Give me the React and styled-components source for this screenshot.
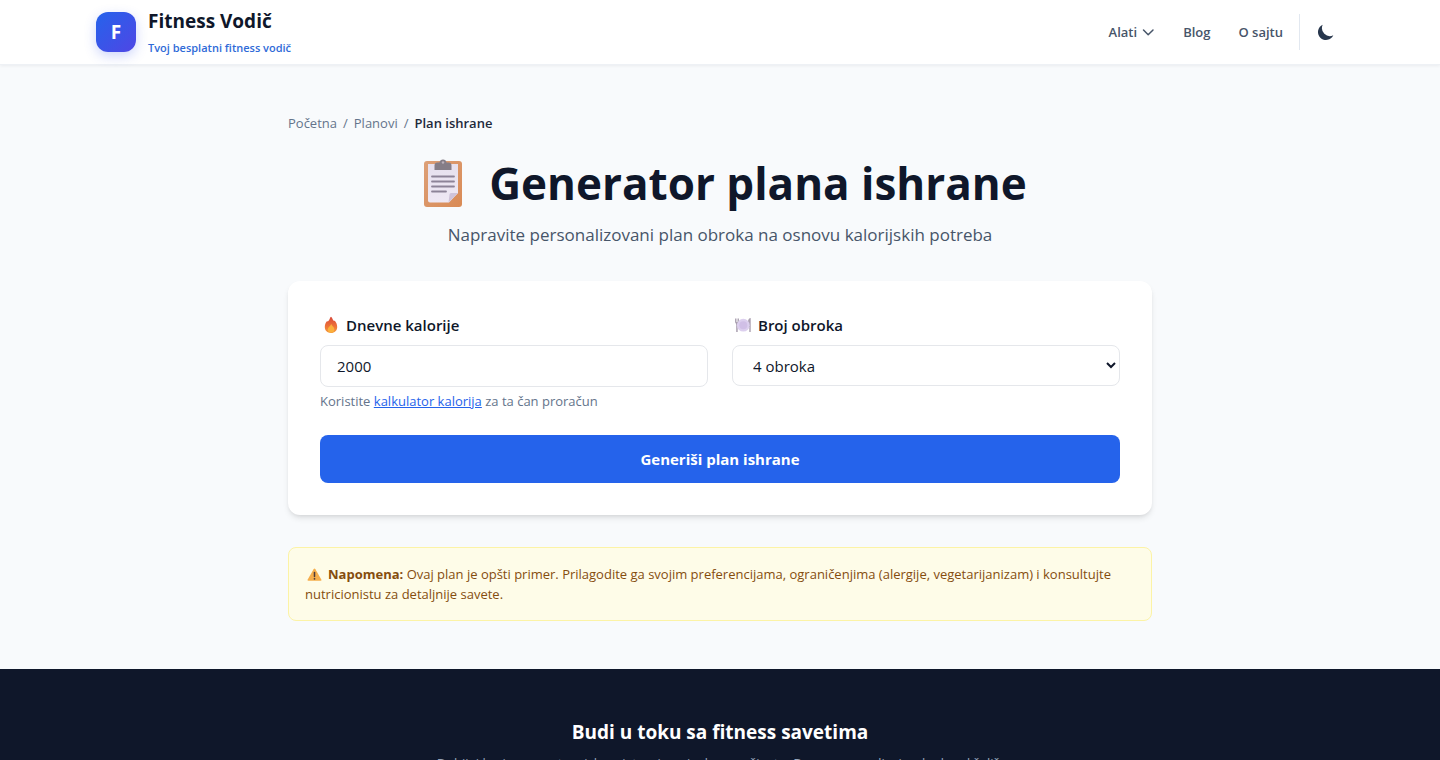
import React, { useState } from "react";
import styled, { createGlobalStyle } from "styled-components";

const GlobalStyle = createGlobalStyle`
  *, *::before, *::after { box-sizing: border-box; }
  body {
    margin: 0;
    background: #f8fafc;
    color: #0f172a;
    font-family: "Segoe UI", "Open Sans", "Noto Sans", sans-serif;
    font-size: 15px;
    line-height: 24px;
    overflow-x: hidden;
  }
  h1, h2, p { margin: 0; }
  button, input, select { font: inherit; }
`;

const Header = styled.header`
  background: #fff;
  border-bottom: 1px solid #eef1f5;
  box-shadow: 0 1px 3px rgba(15, 23, 42, 0.06);
`;

const HeaderInner = styled.div`
  max-width: 1280px;
  height: 64px;
  margin: 0 auto;
  padding: 0 16px;
  display: flex;
  align-items: center;
  justify-content: space-between;
`;

const Brand = styled.a`
  display: flex;
  align-items: center;
  gap: 12px;
  color: inherit;
  text-decoration: none;
`;

const BrandMark = styled.span`
  display: grid;
  place-items: center;
  width: 40px;
  height: 40px;
  border-radius: 12px;
  background: linear-gradient(135deg, #2563eb, #4f46e5);
  box-shadow: 0 4px 12px rgba(59, 91, 240, 0.25);
  color: #fff;
  font-size: 19px;
  font-weight: 700;
`;

const BrandText = styled.span`
  display: flex;
  flex-direction: column;
  padding-top: 4px;
`;

const BrandName = styled.span`
  font-size: 19px;
  font-weight: 700;
  line-height: 28px;
`;

const BrandTagline = styled.span`
  color: #2f6bd8;
  font-size: 11px;
  font-weight: 600;
  line-height: 26px;
`;

const Nav = styled.nav`
  display: flex;
  align-items: center;
  gap: 28px;
  padding-right: 8px;
`;

const navItem = `
  color: #475569;
  font-size: 13px;
  font-weight: 600;
  line-height: 20px;
`;

const NavLink = styled.a`
  ${navItem}
  text-decoration: none;
`;

const NavButton = styled.button`
  ${navItem}
  display: flex;
  align-items: center;
  gap: 4px;
  padding: 0;
  border: 0;
  background: none;
`;

const ThemeArea = styled.div`
  display: flex;
  align-items: center;
  height: 36px;
  margin-left: -12px;
  padding-left: 16px;
  border-left: 1px solid #e2e8f0;
`;

const ThemeButton = styled.button`
  display: grid;
  padding: 0;
  border: 0;
  background: none;
  color: #28374d;
`;

const Main = styled.main`
  max-width: 896px;
  margin: 0 auto;
  padding: 48px 16px;
`;

const Breadcrumbs = styled.nav`
  display: flex;
  gap: 6px;
  margin-bottom: 24px;
  color: #64748b;
  font-size: 13px;
  line-height: 20px;

  a { color: inherit; text-decoration: none; }
  strong { color: #1e293b; font-weight: 600; }
`;

const Intro = styled.div`
  display: flex;
  flex-direction: column;
  align-items: center;
  gap: 12px;
  margin-bottom: 32px;
  text-align: center;
`;

const Title = styled.h1`
  display: flex;
  align-items: center;
  gap: 24px;
  padding-left: 8px;
  font-size: 44px;
  font-weight: 700;
  line-height: 52px;
`;

const Subtitle = styled.p`
  color: #475569;
  font-size: 17px;
  line-height: 28px;
`;

const Card = styled.form`
  padding: 32px;
  border-radius: 12px;
  background: #fff;
  box-shadow: 0 4px 6px -1px rgba(0, 0, 0, 0.1), 0 2px 4px -2px rgba(0, 0, 0, 0.1);
`;

const Fields = styled.div`
  display: grid;
  grid-template-columns: 1fr 1fr;
  align-items: start;
  gap: 24px;
  margin-bottom: 24px;
`;

const Field = styled.div`
  display: flex;
  flex-direction: column;
`;

const Label = styled.label`
  display: flex;
  align-items: center;
  gap: 6px;
  margin-bottom: 8px;
  padding-left: 2px;
  font-weight: 600;
`;

const Input = styled.input`
  width: 100%;
  height: 42px;
  padding: 8px 16px;
  border: 1px solid #e5e7eb;
  border-radius: 8px;
  background: #fff;
  color: #0f172a;
`;

const Select = styled.select`
  width: 100%;
  height: 41px;
  padding: 8px 0 8px 16px;
  border: 1px solid #e5e7eb;
  border-radius: 8px;
  background: #fff;
  color: #0f172a;
`;

const Hint = styled.p`
  margin-top: 4px;
  color: #64748b;
  font-size: 13px;
  line-height: 20px;

  a { color: #2563eb; }
`;

const Submit = styled.button`
  display: block;
  width: 100%;
  height: 48px;
  border: 0;
  border-radius: 8px;
  background: #2563eb;
  color: #fff;
  font-weight: 700;
`;

const Notice = styled.p`
  margin-top: 32px;
  padding: 16px;
  border: 1px solid #fcf3a6;
  border-radius: 8px;
  background: #fefce8;
  color: #854d0e;
  font-size: 13px;
  line-height: 20px;

  svg { margin: 0 6px 0 2px; vertical-align: -3px; }
`;

const Footer = styled.footer`
  padding: 48px 16px;
  background: #0f172a;
  color: #94a3b8;
  text-align: center;
`;

const FooterTitle = styled.h2`
  margin-bottom: 6px;
  color: #fff;
  font-size: 19px;
  font-weight: 700;
  line-height: 30px;
`;

const FooterText = styled.p`
  font-size: 13px;
  line-height: 20px;
`;

function ChevronIcon() {
  return (
    <svg width="14" height="14" viewBox="0 0 14 14" fill="none" stroke="currentColor" strokeWidth="1.5" strokeLinecap="round" strokeLinejoin="round" aria-hidden="true">
      <path d="M2.500 5l4.700 4.700L12 5" />
    </svg>
  );
}

function MoonIcon() {
  return (
    <svg width="20" height="20" viewBox="0 0 20 20" fill="currentColor" aria-hidden="true">
      <path d="M17.293 13.293A8 8 0 016.707 2.707a8.001 8.001 0 1010.586 10.586z" />
    </svg>
  );
}

function ClipboardIcon() {
  return (
    <svg width="44" height="48" viewBox="0 0 44 48" aria-hidden="true">
      <defs>
        <linearGradient id="board" x1="0" y1="0" x2="1" y2="1">
          <stop offset="0" stopColor="#dda078" />
          <stop offset="1" stopColor="#d98a55" />
        </linearGradient>
        <linearGradient id="sheet" x1="0" y1="0" x2="0" y2="1">
          <stop offset="0" stopColor="#e6e0ee" />
          <stop offset="1" stopColor="#efe8f4" />
        </linearGradient>
      </defs>
      <rect x="3" y="2" width="38" height="46" rx="3" fill="url(#board)" />
      <path d="M7 5h30v29L28 43.500H9a2 2 0 0 1-2-2z" fill="url(#sheet)" />
      <path d="M37 34l-9.500 9.500 1-8q0-1.500 1.500-1.500z" fill="#cfc3d9" />
      <path d="M13.500 11V6.500q0-3 3-3h2Q19 .5 22 .5T25.500 3.500h2q3 0 3 3V11z" fill="#857d87" />
      <circle cx="22" cy="3.500" r="1.200" fill="#b9b0ba" />
      <path d="M11 17.500h22M11 22.500h22M11 27.500h22M11 32.500h14" stroke="#8d8398" strokeWidth="1.800" strokeLinecap="round" />
    </svg>
  );
}

function FlameIcon() {
  return (
    <svg width="18" height="18" viewBox="0 0 18 18" aria-hidden="true">
      <defs>
        <linearGradient id="flame" x1="0" y1="0" x2="0" y2="1">
          <stop offset="0" stopColor="#d8483a" />
          <stop offset="0.550" stopColor="#ec7038" />
          <stop offset="1" stopColor="#f59a3c" />
        </linearGradient>
      </defs>
      <path d="M9 .8c.8 0 1.300 2.300 2.700 4 .5.600.8-.3 1.300.2 1.200 1.300 2.200 3.500 2.200 5.900 0 3.600-2.500 6-6.200 6s-6.200-2.400-6.200-5.900c0-2.300.9-4.200 1.900-5.500.5-.6.900.2 1.400-.2C7.500 4.300 8.100.8 9 .8z" fill="url(#flame)" />
      <path d="M9.200 8c.5 1.800 3.200 3 3.200 5.400 0 1.900-1.300 3.100-3.300 3.100s-3.400-1.200-3.400-3.100c0-2.200 2.800-3.200 3.500-5.400z" fill="#fbb03c" />
    </svg>
  );
}

function PlateIcon() {
  return (
    <svg width="18" height="18" viewBox="0 0 18 18" aria-hidden="true">
      <path d="M1.500 2.500v4M3 2.500v4M4.500 2.500v4" stroke="#a59bab" strokeWidth="0.900" />
      <path d="M1.200 6h3.500l-1 2.500V16H2.200V8.500z" fill="#aaa0b0" />
      <path d="M16.700 2v14h-1.400v-5H14V6c0-2.500 1.200-4 2.700-4z" fill="#aaa0b0" />
      <circle cx="9.300" cy="9.200" r="6.400" fill="#dccfee" />
      <circle cx="9.300" cy="9.200" r="4" fill="#d0bfe6" />
    </svg>
  );
}

function WarningIcon() {
  return (
    <svg width="15" height="15" viewBox="0 0 15 15" aria-hidden="true">
      <path d="M6.600 2.200q.9-1.400 1.800 0l5.900 10.200q.7 1.400-.8 1.400h-12q-1.500 0-.8-1.400z" fill="#f5ae4c" />
      <path d="M7.500 5.500v4" stroke="#4b3a3a" strokeWidth="1.500" strokeLinecap="round" />
      <circle cx="7.500" cy="11.800" r="0.900" fill="#4b3a3a" />
    </svg>
  );
}

export default function App() {
  const [calories, setCalories] = useState("2000");
  const [meals, setMeals] = useState("4");

  return (
    <>
      <GlobalStyle />
      <Header>
        <HeaderInner>
          <Brand href="#">
            <BrandMark>F</BrandMark>
            <BrandText>
              <BrandName>Fitness Vodič</BrandName>
              <BrandTagline>Tvoj besplatni fitness vodič</BrandTagline>
            </BrandText>
          </Brand>
          <Nav aria-label="Glavna navigacija">
            <NavButton type="button">
              Alati <ChevronIcon />
            </NavButton>
            <NavLink href="#blog">Blog</NavLink>
            <NavLink href="#o-sajtu">O sajtu</NavLink>
            <ThemeArea>
              <ThemeButton type="button" aria-label="Tamna tema">
                <MoonIcon />
              </ThemeButton>
            </ThemeArea>
          </Nav>
        </HeaderInner>
      </Header>

      <Main>
        <Breadcrumbs aria-label="Putanja">
          <a href="#pocetna">Početna</a>
          <span>/</span>
          <a href="#planovi">Planovi</a>
          <span>/</span>
          <strong>Plan ishrane</strong>
        </Breadcrumbs>

        <Intro>
          <Title>
            <ClipboardIcon />
            Generator plana ishrane
          </Title>
          <Subtitle>Napravite personalizovani plan obroka na osnovu kalorijskih potreba</Subtitle>
        </Intro>

        <Card onSubmit={(event) => event.preventDefault()}>
          <Fields>
            <Field>
              <Label htmlFor="calories">
                <FlameIcon />
                Dnevne kalorije
              </Label>
              <Input id="calories" inputMode="numeric" value={calories} onChange={(event) => setCalories(event.target.value)} />
              <Hint>
                Koristite <a href="#kalkulator">kalkulator kalorija</a> za ta čan proračun
              </Hint>
            </Field>
            <Field>
              <Label htmlFor="meals">
                <PlateIcon />
                Broj obroka
              </Label>
              <Select id="meals" value={meals} onChange={(event) => setMeals(event.target.value)}>
                <option value="3">3 obroka</option>
                <option value="4">4 obroka</option>
                <option value="5">5 obroka</option>
              </Select>
            </Field>
          </Fields>
          <Submit type="submit">Generiši plan ishrane</Submit>
        </Card>

        <Notice>
          <WarningIcon />
          <strong>Napomena:</strong> Ovaj plan je opšti primer. Prilagodite ga svojim preferencijama, ograničenjima (alergije, vegetarijanizam) i konsultujte nutricionistu za detaljnije savete.
        </Notice>
      </Main>

      <Footer>
        <FooterTitle>Budi u toku sa fitness savetima</FooterTitle>
        <FooterText>Dobijaj korisne savete o ishrani, treningu i zdravom životu. Bez spama, odjavi se kad god želiš.</FooterText>
      </Footer>
    </>
  );
}
